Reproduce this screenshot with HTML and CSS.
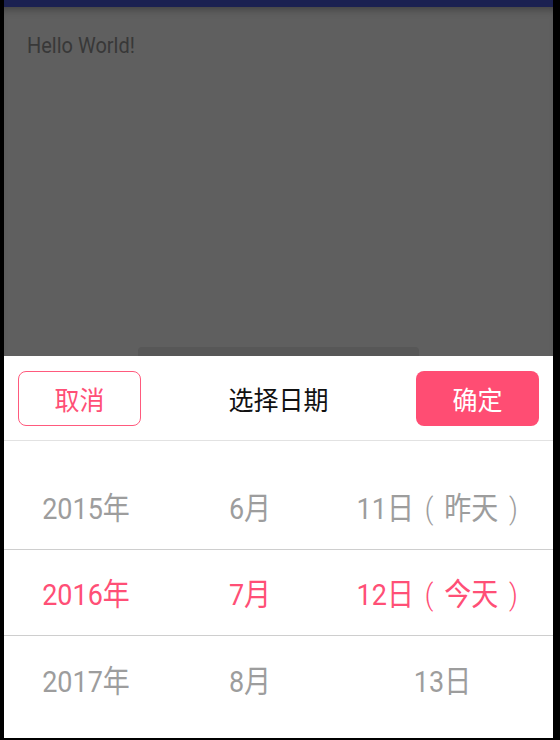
FILE: index.html
```html
<!DOCTYPE html>
<html lang="zh">
<head>
<meta charset="utf-8">
<title>选择日期</title>
<link rel="stylesheet" href="styles.css">
</head>
<body>
<div class="screen">
  <div class="status"></div>
  <div class="dim">
    <p class="hello"><span class="stretch">Hello World!</span></p>
    <div class="tab"></div>
  </div>
  <div class="sheet">
    <div class="head">
      <button class="btn btn-cancel"><span class="stretch-sm">取消</span></button>
      <div class="title"><span class="stretch-sm">选择日期</span></div>
      <button class="btn btn-ok"><span class="stretch-sm">确定</span></button>
    </div>
    <div class="picker">
      <div class="row">
        <div class="cell"><span class="stretch">2015年</span></div>
        <div class="cell"><span class="stretch">6月</span></div>
        <div class="cell"><span class="stretch">11日<span class="paren">(</span>昨天<span class="paren">)</span></span></div>
      </div>
      <div class="row row-active">
        <div class="cell"><span class="stretch">2016年</span></div>
        <div class="cell"><span class="stretch">7月</span></div>
        <div class="cell"><span class="stretch">12日<span class="paren">(</span>今天<span class="paren">)</span></span></div>
      </div>
      <div class="row">
        <div class="cell"><span class="stretch">2017年</span></div>
        <div class="cell"><span class="stretch">8月</span></div>
        <div class="cell"><span class="stretch">13日</span></div>
      </div>
    </div>
  </div>
</div>
</body>
</html>
```
FILE: styles.css
```css
html, body {
  margin: 0;
  padding: 0;
  background: #000;
}
body {
  font-family: Roboto, "Noto Sans CJK SC", sans-serif;
}
.screen {
  width: 549px;
  height: 738px;
  margin: 0 7px 2px 4px;
  display: flex;
  flex-direction: column;
  overflow: hidden;
}
.status {
  height: 7px;
  background: #1b2151;
  flex: none;
}
.dim {
  height: 349px;
  flex: none;
  background: #5f5f5f;
  box-shadow: inset 0 8px 8px -6px rgba(0,0,0,0.35);
  display: flex;
  flex-direction: column;
  box-sizing: border-box;
  padding-top: 28px;
}
.hello {
  margin: 0 0 0 23px;
  font-size: 20px;
  line-height: 20px;
  color: #383838;
}
.stretch {
  display: inline-block;
  transform: scaleY(1.12);
}
.stretch-sm {
  display: inline-block;
  transform: scaleY(1.06);
}
.tab {
  margin-top: auto;
  margin-left: 134px;
  width: 281px;
  height: 9px;
  background: #575757;
  border-radius: 4px 4px 0 0;
}
.sheet {
  flex: 1;
  background: #fff;
}
.head {
  height: 85px;
  box-sizing: border-box;
  display: flex;
  align-items: center;
  justify-content: space-between;
  padding: 0 14px;
  border-bottom: 1px solid #e2e2e2;
}
.btn {
  width: 123px;
  height: 55px;
  border-radius: 8px;
  font-family: Roboto, "Noto Sans CJK SC", sans-serif;
  font-size: 25px;
  padding: 0;
  margin: 0;
  box-sizing: border-box;
  display: flex;
  align-items: center;
  justify-content: center;
}
.btn-cancel {
  background: #fff;
  border: 1.5px solid #ff5a7d;
  color: #ff4f76;
}
.btn-ok {
  background: #ff4d73;
  border: none;
  color: #fff;
}
.title {
  font-size: 25px;
  color: #111;
}
.picker {
  padding-top: 22px;
}
.row {
  display: grid;
  grid-template-columns: 164px 164px 1fr;
  height: 86px;
  align-items: center;
  box-sizing: border-box;
  font-size: 27px;
  color: #9d9d9d;
}
.row-active {
  height: 87px;
  border-top: 1px solid #cecece;
  border-bottom: 1px solid #cecece;
  color: #ff4f76;
}
.cell {
  text-align: center;
  white-space: nowrap;
}
.paren {
  display: inline-block;
  width: 1.12em;
  text-align: center;
  font-weight: 300;
}
```
